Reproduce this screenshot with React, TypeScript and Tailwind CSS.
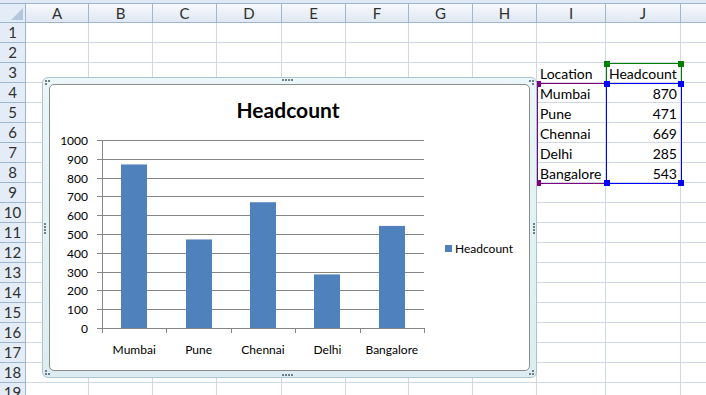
import React from 'react';

const colWidths = ['w-[63px]', 'w-[64px]', 'w-[64px]', 'w-[65px]', 'w-[64px]', 'w-[63px]', 'w-[64px]', 'w-[64px]', 'w-[69px]', 'w-[75px]', 'w-[120px]'];
const colNames = ['A', 'B', 'C', 'D', 'E', 'F', 'G', 'H', 'I', 'J', 'K'];

const data = [
  { loc: 'Mumbai', v: 870 },
  { loc: 'Pune', v: 471 },
  { loc: 'Chennai', v: 669 },
  { loc: 'Delhi', v: 285 },
  { loc: 'Bangalore', v: 543 },
];

// cell contents keyed by row number and column index
const cellText = (row: number, col: number): { text: string; right?: boolean } | null => {
  if (row === 3 && col === 8) return { text: 'Location' };
  if (row === 3 && col === 9) return { text: 'Headcount' };
  if (row >= 4 && row <= 8) {
    const d = data[row - 4];
    if (col === 8) return { text: d.loc };
    if (col === 9) return { text: String(d.v), right: true };
  }
  return null;
};

// four dots in a row or column, used for the chart's resize grips
const Grip = ({ className, vertical }: { className: string; vertical?: boolean }) => (
  <div className={`absolute flex gap-[1px] ${vertical ? 'flex-col' : 'flex-row'} ${className}`}>
    {[0, 1, 2, 3].map((i) => (
      <span key={i} className="h-[2px] w-[2px] bg-[#6f7f88]" />
    ))}
  </div>
);

// corner grip: three dots in a small triangle
const CornerGrip = ({ className }: { className: string }) => (
  <div className={`absolute grid grid-cols-2 gap-[1px] ${className}`}>
    <span className="h-[2px] w-[2px] bg-[#6f7f88]" />
    <span className="h-[2px] w-[2px] bg-[#6f7f88]" />
    <span className="h-[2px] w-[2px] bg-[#6f7f88]" />
    <span className="h-[2px] w-[2px]" />
  </div>
);

const Handle = ({ className, color }: { className: string; color: string }) => (
  <div className={`absolute h-[6px] w-[6px] ${color} ${className}`} />
);

const Chart = () => {
  const x0 = 52;
  const x1 = 374;
  const y0 = 243;
  const scale = 0.188;
  const step = (x1 - x0) / data.length;
  const ticks = [0, 100, 200, 300, 400, 500, 600, 700, 800, 900, 1000];

  return (
    <svg width="479" height="285" className="block" style={{ fontFamily: 'Lato, "Liberation Sans", sans-serif' }}>
      <text x="238" y="33" textAnchor="middle" fontSize="21" fontWeight="700" fill="#000">
        Headcount
      </text>
      {ticks.map((t) => {
        const y = Math.round(y0 - t * scale) + 0.5;
        return (
          <g key={t}>
            <line x1={x0 - 5} x2={x1} y1={y} y2={y} stroke="#868686" strokeWidth="1" />
            <text x="38" y={y + 4} textAnchor="end" fontSize="12" fill="#000">
              {t}
            </text>
          </g>
        );
      })}
      {data.map((d, i) => {
        const cx = x0 + step * (i + 0.5);
        const h = d.v * scale;
        return (
          <g key={d.loc}>
            <rect x={Math.round(cx - 13)} y={y0 - h} width="26" height={h} fill="#4f81bd" />
            <text x={cx} y="269" textAnchor="middle" fontSize="12" fill="#000">
              {d.loc}
            </text>
          </g>
        );
      })}
      <line x1={x0 + 0.5} x2={x0 + 0.5} y1={55} y2={y0 + 1} stroke="#868686" strokeWidth="1" />
      {[0, 1, 2, 3, 4, 5].map((i) => {
        const x = Math.round(x0 + step * i) + 0.5;
        return <line key={i} x1={x} x2={x} y1={y0} y2={y0 + 5} stroke="#868686" strokeWidth="1" />;
      })}
      <rect x="395" y="160" width="7" height="7" fill="#4f81bd" />
      <text x="405" y="168" fontSize="12" fill="#000">
        Headcount
      </text>
    </svg>
  );
};

export default function App() {
  const rows = Array.from({ length: 19 }, (_, i) => i + 1);

  return (
    <div
      className="relative h-[395px] w-[706px] overflow-hidden bg-white text-[15px] text-[#222]"
      style={{ fontFamily: 'Lato, "Liberation Sans", sans-serif' }}
    >
      <div className="h-[4px] border-b border-[#9eb6ce] bg-[#dfe8f4]" />

      {/* column headers */}
      <div className="flex h-[19px]">
        <div className="flex w-[26px] shrink-0 items-end justify-end border-r border-b border-[#9eb6ce] bg-[#e4ecf7] p-[2px]">
          <svg width="12" height="12">
            <polygon points="12,0 12,12 0,12" fill="#b5c7dc" />
          </svg>
        </div>
        {colNames.map((c, i) => (
          <div
            key={c}
            className={`${colWidths[i]} shrink-0 border-r border-b border-[#9eb6ce] bg-gradient-to-b from-[#f7f9fc] to-[#dfe7f2] text-center leading-[18px] text-[#303030]`}
          >
            {c}
          </div>
        ))}
      </div>

      {/* rows */}
      {rows.map((r) => (
        <div key={r} className="flex h-[20px]">
          <div className="w-[26px] shrink-0 border-r border-b border-[#9eb6ce] bg-[#e4ecf7] text-center leading-[19px] text-[#303030]">
            {r}
          </div>
          {colNames.map((c, i) => {
            const cell = cellText(r, i);
            return (
              <div
                key={c}
                className={`${colWidths[i]} shrink-0 whitespace-nowrap border-r border-b border-[#d0d7e5] px-[3px] text-[14px] leading-[21px] text-black ${cell?.right ? 'text-right' : 'text-left'}`}
              >
                {cell?.text}
              </div>
            );
          })}
        </div>
      ))}

      {/* range highlights */}
      <div className="absolute left-[606px] top-[63px] h-[21px] w-[76px] border border-[#008000]">
        <Handle color="bg-[#008000]" className="-left-[3px] -top-[3px]" />
        <Handle color="bg-[#008000]" className="-right-[3px] -top-[3px]" />
      </div>
      <div className="absolute left-[537px] top-[83px] h-[101px] w-[70px] border border-[#800080]">
        <Handle color="bg-[#800080]" className="-left-[3px] -top-[3px]" />
        <Handle color="bg-[#800080]" className="-left-[3px] -bottom-[3px]" />
      </div>
      <div className="absolute left-[606px] top-[83px] h-[101px] w-[76px] border border-[#0000ff]">
        <Handle color="bg-[#0000ff]" className="-left-[3px] -top-[3px]" />
        <Handle color="bg-[#0000ff]" className="-right-[3px] -top-[3px]" />
        <Handle color="bg-[#0000ff]" className="-left-[3px] -bottom-[3px]" />
        <Handle color="bg-[#0000ff]" className="-right-[3px] -bottom-[3px]" />
      </div>

      {/* embedded chart */}
      <div className="absolute left-[42px] top-[77px] h-[301px] w-[495px] rounded-[6px] border border-[#a9c5cf] bg-gradient-to-b from-[#eaf6f8] to-[#dcedf1] p-[6px]">
        <div className="h-full w-full overflow-hidden rounded-[5px] border border-[#8c8c8c] bg-white">
          <Chart />
        </div>
        <CornerGrip className="left-[2px] top-[2px]" />
        <CornerGrip className="right-[2px] bottom-[2px] rotate-180" />
        <CornerGrip className="right-[2px] top-[2px] rotate-90" />
        <CornerGrip className="left-[2px] bottom-[2px] -rotate-90" />
        <Grip className="left-[239px] top-[1px]" />
        <Grip className="left-[239px] bottom-[1px]" />
        <Grip vertical className="left-[1px] top-[145px]" />
        <Grip vertical className="right-[1px] top-[145px]" />
      </div>
    </div>
  );
}
